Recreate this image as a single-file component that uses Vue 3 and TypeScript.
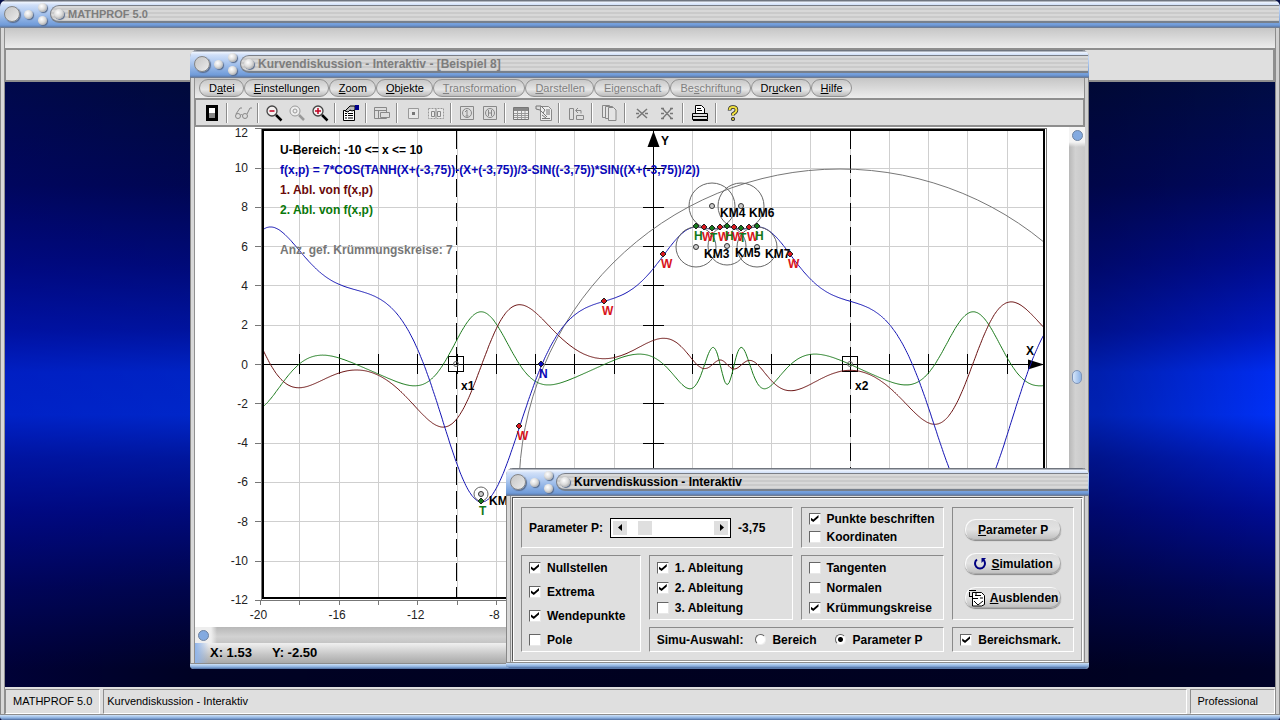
<script setup lang="ts">
import { computed, ref } from 'vue'

interface MenuItem { pre: string; key: string; post: string; off?: boolean }
interface Mark { x: number; y: number; kind: 'H' | 'T' | 'W' | 'N' }
interface Tool { icon: string; name: string; off?: boolean }

const menu: MenuItem[] = [
  { pre: 'D', key: 'a', post: 'tei' },
  { pre: '', key: 'E', post: 'instellungen' },
  { pre: '', key: 'Z', post: 'oom' },
  { pre: '', key: 'O', post: 'bjekte' },
  { pre: '', key: 'T', post: 'ransformation', off: true },
  { pre: '', key: 'D', post: 'arstellen', off: true },
  { pre: 'Ei', key: 'g', post: 'enschaft', off: true },
  { pre: 'Be', key: 's', post: 'chriftung', off: true },
  { pre: 'Dr', key: 'u', post: 'cken' },
  { pre: '', key: 'H', post: 'ilfe' },
]

const tools: Tool[][] = [
  [{ icon: 'door', name: 'Beenden' }],
  [{ icon: 'glasses', name: 'Ansicht', off: true }],
  [{ icon: 'zoomout', name: 'Verkleinern' }, { icon: 'zoomfit', name: 'Zoom', off: true }, { icon: 'zoomin', name: 'Vergrößern' }],
  [{ icon: 'props', name: 'Einstellungen' }],
  [{ icon: 'panes', name: 'Fenster', off: true }],
  [{ icon: 'single', name: 'Punkt', off: true }, { icon: 'double', name: 'Punkte', off: true }],
  [{ icon: 'one', name: 'Kreis 1', off: true }, { icon: 'two', name: 'Kreis 2', off: true }],
  [{ icon: 'table', name: 'Tabelle', off: true }, { icon: 'sheet', name: 'Blatt', off: true }],
  [{ icon: 'swap', name: 'Tauschen', off: true }],
  [{ icon: 'copy', name: 'Kopieren', off: true }],
  [{ icon: 'cross1', name: 'Löschen', off: true }, { icon: 'cross2', name: 'Alle löschen', off: true }],
  [{ icon: 'printer', name: 'Drucken' }],
  [{ icon: 'help', name: 'Hilfe' }],
]

const p = ref(-3.75)
const label = computed(() => p.value.toFixed(2).replace('.', ','))

const X0 = 653.5
const Y0 = 364.5
const U = 19.65
const px = (x: number) => X0 + x * U
const py = (y: number) => Y0 - y * U

function f(x: number): number {
  const u = x + p.value
  return 7 * Math.cos(Math.tanh(u) - u / 3 - Math.sin(p.value) * Math.sin(u / 2))
}
const d = 0.001
const f1 = (x: number) => (f(x + d) - f(x - d)) / (2 * d)
const f2 = (x: number) => (f(x + d) - 2 * f(x) + f(x - d)) / (d * d)

function trace(fn: (x: number) => number): string {
  const pts: string[] = []
  for (let x = -19.9; x <= 19.9; x += 0.05) pts.push(px(x).toFixed(1) + ',' + py(fn(x)).toFixed(1))
  return pts.join(' ')
}
const curve = computed(() => trace(f))
const curve1 = computed(() => trace(f1))
const curve2 = computed(() => trace(f2))

const evens = Array.from({ length: 19 }, (_, i) => (i - 9) * 2)
const yTicks = Array.from({ length: 13 }, (_, i) => 12 - i * 2)
const yInner = yTicks.filter((v) => Math.abs(v) < 12)
const xTicks = [-20, -16, -12, -8]

const marks: Mark[] = [
  { x: 696, y: 226, kind: 'H' }, { x: 704, y: 227, kind: 'W' }, { x: 712, y: 228, kind: 'T' },
  { x: 720, y: 227, kind: 'W' }, { x: 727, y: 226, kind: 'H' }, { x: 734, y: 227, kind: 'W' },
  { x: 741, y: 228, kind: 'T' }, { x: 749, y: 227, kind: 'W' }, { x: 757, y: 226, kind: 'H' },
  { x: 663, y: 254, kind: 'W' }, { x: 604, y: 301, kind: 'W' }, { x: 519, y: 426, kind: 'W' },
  { x: 790, y: 254, kind: 'W' }, { x: 541, y: 364, kind: 'N' }, { x: 481, y: 501, kind: 'T' },
]
const circles = [
  { x: 712, y: 206, r: 23, name: 'KM4' }, { x: 741, y: 206, r: 23, name: 'KM6' },
  { x: 696, y: 247, r: 20, name: 'KM3' }, { x: 727, y: 246, r: 19, name: 'KM5' },
  { x: 757, y: 247, r: 20, name: 'KM7' }, { x: 481, y: 494, r: 7, name: 'KM2' },
]

const zeros = ref([
  { name: 'Nullstellen', on: true }, { name: 'Extrema', on: true },
  { name: 'Wendepunkte', on: true }, { name: 'Pole', on: false },
])
const derivs = ref([
  { name: '1. Ableitung', on: true }, { name: '2. Ableitung', on: true }, { name: '3. Ableitung', on: false },
])
const captions = ref([{ name: 'Punkte beschriften', on: true }, { name: 'Koordinaten', on: false }])
const lines = ref([
  { name: 'Tangenten', on: false }, { name: 'Normalen', on: false }, { name: 'Krümmungskreise', on: true },
])
const rangeMark = ref(true)
const simu = ref('p')
</script>

<template>
  <div class="frame main">
    <svg class="sprite" aria-hidden="true">
      <symbol id="door" viewBox="0 0 18 18"><path d="M3 1h12v16H3z" fill="#000" /><path d="M6 4h6v5H6z" fill="#fff" /><path d="M6 9h6v5H6z" fill="#888" /></symbol>
      <symbol id="glasses" viewBox="0 0 18 18"><g fill="none" stroke="#888"><circle cx="4" cy="12" r="2.500" /><circle cx="11" cy="12" r="2.500" /><path d="M2 10L6 4h2M13 10l3-6h2M6.500 11q1-1 2 0" /></g></symbol>
      <symbol id="zoomout" viewBox="0 0 18 18"><circle cx="7" cy="7" r="5" fill="#f4f0f0" stroke="#444" stroke-width="1.300" /><path d="M4.500 7h5" stroke="#c00020" stroke-width="1.500" /><path d="M11 11l5.500 5.500" stroke="#000" stroke-width="2.500" /></symbol>
      <symbol id="zoomin" viewBox="0 0 18 18"><circle cx="7" cy="7" r="5" fill="#f4f0f0" stroke="#444" stroke-width="1.300" /><path d="M4 7h6M7 4v6" stroke="#c00020" stroke-width="1.500" /><path d="M11 11l5.500 5.500" stroke="#000" stroke-width="2.500" /></symbol>
      <symbol id="zoomfit" viewBox="0 0 18 18"><g fill="none" stroke="#999"><circle cx="7" cy="7" r="5" fill="#eee" /><circle cx="7" cy="7" r="2" /><path d="M11 11l5 5" stroke-width="2.500" /></g></symbol>
      <symbol id="props" viewBox="0 0 18 18"><path d="M1.500 6.500h11v10h-11z" fill="#fff" stroke="#000" /><path d="M3 9.500h2M6 9.500h5M3 11.500h2M6 11.500h5M3 14h2M6 14h5" stroke="#000" /><path d="M3 7l5-5h5v4l-3 1-2-1-2 2z" fill="#bbb" stroke="#000" /><path d="M13 1h4v5h-4z" fill="#00008b" /></symbol>
      <symbol id="panes" viewBox="0 0 18 18"><g fill="none" stroke="#888"><path d="M1.500 3.500h12v11h-12zM1.500 6.500h12M5.500 6.500v8" /><path d="M7.500 8.500h9v5h-9z" fill="#ddd" /></g></symbol>
      <symbol id="single" viewBox="0 0 18 18"><path d="M4.500 4.500h10v10h-10z" fill="#e8e8e8" stroke="#999" /><path d="M8 8h3v3H8z" fill="#777" /></symbol>
      <symbol id="double" viewBox="0 0 18 18"><path d="M1.500 4.500h15v10h-15z" fill="#e8e8e8" stroke="#999" stroke-dasharray="2 1" /><path d="M4.500 7.500h3v5h-3zM10.500 7.500h3v5h-3zM9 5v9" fill="none" stroke="#888" /></symbol>
      <symbol id="one" viewBox="0 0 18 18"><g fill="none" stroke="#888"><path d="M2.500 2.500h13v13h-13z" /><circle cx="9" cy="9" r="4.500" /><path d="M7 8l2-2v6M7.500 12h3" /></g></symbol>
      <symbol id="two" viewBox="0 0 18 18"><g fill="none" stroke="#888"><path d="M2.500 2.500h13v13h-13z" /><circle cx="9" cy="9" r="4.500" /><path d="M7.500 6v6M10.500 6v6M7.500 9h3" /></g></symbol>
      <symbol id="table" viewBox="0 0 18 18"><path d="M1.500 3.500h15v12h-15z" fill="#eee" stroke="#777" /><path d="M2 4h14v3H2z" fill="#888" /><path d="M2 9.500h14M2 11.500h14M2 13.500h14M5.500 7v8M9.500 7v8M13 7v8" stroke="#999" /></symbol>
      <symbol id="sheet" viewBox="0 0 18 18"><path d="M5.500 2.500h8l3 3v11h-11z" fill="#eee" stroke="#888" /><path d="M1 2h5l4 4-2 3-3-3-4-1zM7 11l4 3M7 8l5 5M11 6h4M11 8h4M11 10h4M7 14.500h8" fill="none" stroke="#777" /></symbol>
      <symbol id="swap" viewBox="0 0 18 18"><path d="M2.500 4.500h4v11h-4zM9.500 11.500h7v4h-7zM9 6.500h5v3M11 4L8.500 6.500 11 9" fill="none" stroke="#888" /></symbol>
      <symbol id="copy" viewBox="0 0 18 18"><g fill="#e4e4e4" stroke="#888"><path d="M2.500 1.500h7v12h-7z" /><path d="M5.500 2.500h7v12h-7z" /><path d="M8.500 3.500h5l2.500 2.500v10.500H8.500z" /></g></symbol>
      <symbol id="cross1" viewBox="0 0 18 18"><path d="M4 5l10 9M14 5L4 14M3 9.500h3M12 9.500h3" stroke="#777" stroke-width="1.500" /></symbol>
      <symbol id="cross2" viewBox="0 0 18 18"><path d="M4 4l10 11M14 4L4 15M3 4.500h3M12 4.500h3M3 14.500h3M12 14.500h3M3 9.500h3M12 9.500h3" stroke="#777" stroke-width="1.300" /></symbol>
      <symbol id="printer" viewBox="0 0 18 18"><path d="M4.500 9V1.500h6l3 3V9" fill="#fff" stroke="#000" /><path d="M6 4.500h4M6 6.500h5" stroke="#000" /><path d="M1.500 9.500h15v6h-15z" fill="#ddd" stroke="#000" /><path d="M2 12.500h14M2 16.500h15" stroke="#000" /></symbol>
      <symbol id="help" viewBox="0 0 18 18"><path d="M5.500 6.500q0-3.500 3.500-3.500t3.500 3q0 2-3.500 4v1.500" fill="none" stroke="#222" stroke-width="3.500" /><circle cx="9" cy="15" r="2" fill="#222" /><path d="M5.500 6q0-3 3.500-3t3.500 3q0 2-3.500 4v1.500" fill="none" stroke="#f0e040" stroke-width="2" /><circle cx="9" cy="15" r="1" fill="#f0e040" /></symbol>
    </svg>

    <header class="title dim">
      <span class="knobs">
        <button class="knob big" aria-label="Schließen"></button>
        <button class="knob" aria-label="Symbol"></button>
        <span class="pair"><button class="knob" aria-label="Maximieren"></button><button class="knob" aria-label="Minimieren"></button></span>
      </span>
      <span class="bar small"><button class="knob mid" aria-label="Menü"></button>MATHPROF 5.0</span>
    </header>
    <div class="strip"></div>
    <div class="tray"></div>

    <main class="desk">
      <section class="frame doc">
        <header class="title dim">
          <span class="knobs">
            <button class="knob big" aria-label="Schließen"></button>
            <button class="knob" aria-label="Symbol"></button>
            <span class="pair"><button class="knob" aria-label="Maximieren"></button><button class="knob" aria-label="Minimieren"></button></span>
          </span>
          <span class="bar"><button class="knob mid" aria-label="Menü"></button>Kurvendiskussion - Interaktiv - [Beispiel 8]</span>
        </header>
        <nav class="menu">
          <button v-for="m in menu" :key="m.pre + m.key + m.post" :disabled="m.off">{{ m.pre }}<u>{{ m.key }}</u>{{ m.post }}</button>
        </nav>
        <div class="tools">
          <div v-for="(g, i) in tools" :key="i" class="group" :class="{ wide: i > 7 }">
            <button v-for="t in g" :key="t.icon" :disabled="t.off" :aria-label="t.name">
              <svg width="18" height="18"><use :href="'#' + t.icon" /></svg>
            </button>
          </div>
        </div>
        <div class="view">
          <svg class="plot" viewBox="195 127 874 500">
            <defs><clipPath id="area"><rect x="264" y="131" width="779" height="467" /></clipPath></defs>
            <g stroke="#cfcfcf" shape-rendering="crispEdges">
              <line v-for="v in evens" :key="'gx' + v" :x1="px(v)" :x2="px(v)" y1="131" y2="598" />
              <line v-for="v in yInner" :key="'gy' + v" x1="264" x2="1043" :y1="py(v)" :y2="py(v)" />
            </g>
            <g stroke="#777" shape-rendering="crispEdges">
              <line v-for="v in yTicks" :key="'ty' + v" x1="255" x2="262" :y1="py(v)" :y2="py(v)" />
              <line v-for="v in [-20, ...evens]" :key="'tx' + v" :x1="px(v)" :x2="px(v)" y1="600" y2="605" />
              <path d="M261.500 128.500H1046.500V600.500H261.500z" fill="none" />
            </g>
            <path d="M263 130H1044V598H263z" fill="none" stroke="#000" stroke-width="2" shape-rendering="crispEdges" />
            <g class="axis" text-anchor="end">
              <text v-for="v in yTicks" :key="'ly' + v" x="248" :y="py(v) + (v === 12 ? 8 : 4)">{{ v }}</text>
            </g>
            <g class="axis" text-anchor="middle">
              <text v-for="v in xTicks" :key="'lx' + v" :x="px(v) - 2" y="619">{{ v }}</text>
            </g>
            <g stroke="#000" shape-rendering="crispEdges">
              <path d="M264 364.500H1043M653.500 131V598" />
              <line v-for="v in evens" :key="'ax' + v" :x1="px(v)" :x2="px(v)" y1="354" y2="374" />
              <line v-for="v in yInner" :key="'ay' + v" x1="643" x2="664" :y1="py(v)" :y2="py(v)" />
              <path d="M456.500 131V598M850.500 131V598" stroke-dasharray="18 6" />
              <path d="M448.500 356.500h15v15h-15zM842.500 356.500h15v15h-15z" fill="none" />
            </g>
            <path d="M653.500 131l6 16h-12zM1044 364.500l-16 5v-10z" />
            <g clip-path="url(#area)" fill="none">
              <circle cx="840" cy="490" r="321" stroke="#777" />
              <polyline :points="curve2" stroke="#1b7a1b" />
              <polyline :points="curve1" stroke="#6b1212" />
              <polyline :points="curve" stroke="#1414b4" />
            </g>
            <g fill="none" stroke="#666">
              <circle v-for="c in circles" :key="c.name" :cx="c.x" :cy="c.y" :r="c.r" />
              <circle v-for="c in circles" :key="'c' + c.name" :cx="c.x" :cy="c.y" r="2.500" fill="#ccc" stroke="#333" />
              <circle cx="456" cy="364" r="2.500" /><circle cx="850" cy="364" r="2.500" />
            </g>
            <g class="note">
              <text x="280" y="154">U-Bereich: -10 &lt;= x &lt;= 10</text>
              <text x="280" y="174" class="blue">f(x,p) = 7*COS(TANH(X+({{ label }}))-(X+({{ label }}))/3-SIN(({{ label }}))*SIN((X+({{ label }}))/2))</text>
              <text x="280" y="194" class="red">1. Abl. von f(x,p)</text>
              <text x="280" y="214" class="green">2. Abl. von f(x,p)</text>
              <text x="280" y="254" class="gray">Anz. gef. Krümmungskreise: 7</text>
              <text x="661" y="145">Y</text>
              <text x="1026" y="355">X</text>
              <text x="461" y="390">x1</text>
              <text x="855" y="390">x2</text>
              <text v-for="c in circles" :key="'n' + c.name" :x="c.x + 8" :y="c.y + 11">{{ c.name }}</text>
            </g>
            <g v-for="m in marks" :key="m.x" :class="['mark', m.kind]">
              <path :d="`M${m.x - 3} ${m.y}l3 -3 3 3 -3 3z`" stroke="#222" />
              <text :x="m.x - 2" :y="m.y + 14">{{ m.kind }}</text>
            </g>
          </svg>
          <div class="scroll v"><button class="dot" aria-label="Nach oben"></button><span class="thumb"></span></div>
        </div>
        <div class="scroll h"><button class="dot" aria-label="Nach links"></button></div>
        <footer class="coords"><span>X: 1.53</span><span>Y: -2.50</span></footer>
      </section>

      <section class="frame dialog">
        <header class="title">
          <span class="knobs">
            <button class="knob big" aria-label="Schließen"></button>
            <button class="knob" aria-label="Symbol"></button>
            <span class="pair"><button class="knob" aria-label="Maximieren"></button><button class="knob" aria-label="Minimieren"></button></span>
          </span>
          <span class="bar"><button class="knob mid" aria-label="Menü"></button>Kurvendiskussion - Interaktiv</span>
        </header>
        <form class="panel" @submit.prevent>
          <div class="box param">
            <label for="param">Parameter P:</label>
            <span class="spin">
              <button type="button" aria-label="Kleiner" @click="p -= 0.05"><svg width="5" height="8"><path d="M4 0v7L0 3.500z" /></svg></button>
              <input id="param" v-model.number="p" type="range" min="-5" max="3" step="0.05">
              <button type="button" aria-label="Größer" @click="p += 0.05"><svg width="5" height="8"><path d="M1 0v7l4-3.500z" /></svg></button>
            </span>
            <output for="param">{{ label }}</output>
          </div>
          <div class="box caps">
            <label v-for="c in captions" :key="c.name"><input v-model="c.on" type="checkbox">{{ c.name }}</label>
          </div>
          <div class="box actions">
            <button type="button"><span><u>P</u>arameter P</span></button>
            <button type="button">
              <svg width="14" height="14"><path d="M4 2.500a5 5 0 1 0 6 0" fill="none" stroke="#000080" stroke-width="2" /><path d="M13 1H8.500v5z" fill="#000080" /></svg>
              <span><u>S</u>imulation</span>
            </button>
            <button type="button">
              <svg width="18" height="18"><path d="M4.500 3.500h9l3 3v9l-3 1.500h-9z" fill="#fff" stroke="#000" /><path d="M1 1.500h7M1.500 3v5M1 7.500h4M7 6.500h6M4 9.500h6M6 12l4 4 5-4M8 4v2M12 9h3" fill="none" stroke="#000" /></svg>
              <span><u>A</u>usblenden</span>
            </button>
          </div>
          <div class="box zeros">
            <label v-for="c in zeros" :key="c.name"><input v-model="c.on" type="checkbox">{{ c.name }}</label>
          </div>
          <div class="box derivs">
            <label v-for="c in derivs" :key="c.name"><input v-model="c.on" type="checkbox">{{ c.name }}</label>
          </div>
          <div class="box lines">
            <label v-for="c in lines" :key="c.name"><input v-model="c.on" type="checkbox">{{ c.name }}</label>
          </div>
          <div class="box simu">
            <span>Simu-Auswahl:</span>
            <label><input v-model="simu" type="radio" name="simu" value="b">Bereich</label>
            <label><input v-model="simu" type="radio" name="simu" value="p">Parameter P</label>
          </div>
          <div class="box range">
            <label><input v-model="rangeMark" type="checkbox">Bereichsmark.</label>
          </div>
        </form>
      </section>
    </main>

    <footer class="status"><span>MATHPROF 5.0</span><span class="grow">Kurvendiskussion - Interaktiv</span><span>Professional</span></footer>
  </div>
</template>

<style>
body { margin: 0; background: #06104a; }
</style>

<style scoped>
*, *::before, *::after { box-sizing: border-box; }
button, input { margin: 0; padding: 0; border: 0; font: inherit; color: inherit; background: none; }
.sprite { position: absolute; width: 0; height: 0; }
.frame {
  display: flex; flex-direction: column; font: 11px/14px "Liberation Sans", Arial, sans-serif; color: #000;
  background: linear-gradient(90deg, #888 0 1px, #d8d8d8 1px 4px, #909090 4px 5px, #dedede 5px calc(100% - 5px), #8c8c8c calc(100% - 5px) calc(100% - 4px), #d0d0d0 calc(100% - 4px) calc(100% - 1px), #888 calc(100% - 1px));
  border-radius: 7px 7px 4px 4px;
}
.frame::after {
  content: ""; flex: none; height: 6px; border-radius: 0 0 4px 4px;
  background: linear-gradient(#8d8d8d 0 1px, #cfe2f8 1px, #8bb0e0 4px, #4c6a9c);
}
.main { min-height: 100vh; }

.title {
  display: flex; flex: none; height: 28px; border-radius: 7px 7px 0 0; overflow: hidden;
  font-size: 12px; font-weight: bold;
  background: linear-gradient(#70757e 0 1px, #f0f5fe 2px, #cfdff8 5px, #b9d0f3 10px, #6f9bd9 25px, #5f7ba8 27px, #808080 28px);
}
.dim { color: #7d7d7d; }
.knobs { display: flex; align-items: center; flex: none; gap: 4px; width: 50px; padding-left: 4px; }
.pair { display: flex; flex-direction: column; gap: 4px; margin-left: 1px; }
.knob {
  display: block; flex: none; width: 9px; height: 9px; border-radius: 50%;
  background: radial-gradient(circle at 40% 35%, #fff, #dcdcdc 45%, #8c8c8c 100%); box-shadow: 1px 1px 1px #566a8c;
}
.big { width: 16px; height: 16px; border: 1px solid #858585; background: linear-gradient(135deg, #c4c4c4, #ececec); }
.mid { width: 10px; height: 10px; margin-right: 4px; }
.bar {
  display: flex; align-items: center; flex: 1; margin: 5px 1px 5px 0; padding-left: 3px; white-space: nowrap;
  border: 1px solid #7a7e86; border-right: 0; border-bottom: 2px solid #77808c; border-radius: 9px 0 0 9px;
  background: repeating-linear-gradient(#d8d8d8 0 2px, #cacaca 2px 4px);
}
.small { font-size: 11px; }
.strip { flex: none; height: 20px; margin: 0 5px; background: linear-gradient(#c6c6c6, #ececec); }
.tray { flex: none; height: 34px; margin: 0 5px; background: #dfdfdf; border: solid #8e8e8e; border-width: 2px 2px 2px 1px; }

.desk {
  position: relative; flex: 1; min-height: 605px; margin: 0 5px;
  background:
    linear-gradient(90deg, rgba(0, 0, 90, .3) 0%, rgba(0, 0, 20, .2) 15%, rgba(0, 0, 20, .4) 50%, rgba(0, 0, 20, .3) 86%, rgba(0, 0, 60, 0) 100%),
    linear-gradient(#000c44 0%, #000860 17%, #000c90 30%, #0018c0 41%, #002cf0 48%, #0030f6 55%, #001cc0 62%, #000c94 71%, #000658 84%, #000228 97%);
}
.doc { position: absolute; left: 185px; right: 186px; top: -32px; }
.dialog { position: absolute; left: 501px; right: 186px; top: 386px; }

.menu { display: flex; height: 20px; margin: 0 5px; padding: 1px 4px; background: linear-gradient(#c6c6c6, #ececec); }
.menu button {
  padding: 0 8px 0 9px; border: 1px solid #929292; border-radius: 9px; line-height: 16px; white-space: nowrap;
  background: linear-gradient(#c8c8c8, #e6e6e6 60%, #bcbcbc);
}
.menu button:disabled { color: #808080; }
.tools { display: flex; height: 29px; margin: 0 5px; padding: 0 4px; border: solid #8e8e8e; border-width: 2px 1px 2px 1px; }
.group { display: flex; align-items: center; }
.group + .group::before { content: ""; width: 2px; height: 20px; margin: 0 3px; border-left: 1px solid #8c8c8c; border-right: 1px solid #fff; }
.group button { display: grid; place-items: center; width: 23px; height: 22px; }
.wide button { width: 25px; }

.view { display: flex; margin: 0 4px 0 5px; background: #fff; }
.plot { display: block; flex: 1; min-width: 0; background: #fff; }
.axis { font: 12px "Liberation Sans", Arial, sans-serif; fill: #222; }
.note, .mark { font: bold 12px "Liberation Sans", Arial, sans-serif; }
.blue, .N { fill: #0808b8; }
.red { fill: #6b0a0a; }
.green { fill: #0a780a; }
.gray { fill: #777; }
.H, .T { fill: #14781c; }
.W { fill: #d8141c; }
.scroll { display: flex; background: linear-gradient(90deg, #b8b8b8, #d2d2d2 40%, #c8c8c8); }
.v { flex-direction: column; width: 16px; padding-bottom: 17px; align-items: center; }
.h { height: 16px; margin: 0 5px; align-items: center; background: linear-gradient(90deg, #eee 16px, transparent 22px), linear-gradient(#b8b8b8, #d2d2d2 60%, #c4c4c4); }
.dot { width: 11px; height: 11px; margin: 3px; border: 1px solid #6d82a0; border-radius: 50%; background: #83aae0; }
.v { background: linear-gradient(#f4f4f4 15px, transparent 20px), linear-gradient(90deg, #b8b8b8, #d2d2d2 40%, #c8c8c8); }
.thumb { width: 10px; height: 14px; margin: auto 0; border: 1px solid #7d94b8; border-radius: 5px; background: linear-gradient(90deg, #d6e6fa, #8bb2e6); }
.coords {
  display: flex; gap: 20px; height: 20px; margin: 0 5px; padding-left: 15px; font-size: 13px; font-weight: bold; line-height: 20px;
  background: linear-gradient(90deg, #8fb4ea, rgba(200, 220, 245, 0) 14px), linear-gradient(#f0f0f0, #c4c4c4 60%, #aaa);
}

.panel {
  display: grid; grid-template: 41px 65px 25px / 120fr 144fr 144fr 122fr; gap: 7px 8px; margin: 1px 6px 0 6px; padding: 9px 8px;
  border: 1px solid #555; border-right-color: #fff; border-bottom-color: #fff; box-shadow: inset 1px 1px #fff, inset -1px -1px #999;
  font-size: 12px; font-weight: bold; background: #dfdfdf;
}
.box { display: flex; min-width: 0; white-space: nowrap; border: 1px solid #8a8a8a; border-right-color: #fff; border-bottom-color: #fff; }
.param { grid-area: 1 / 1 / 2 / 3; align-items: center; padding-left: 7px; gap: 7px; }
.caps { grid-area: 1 / 3; flex-direction: column; justify-content: center; gap: 4px; padding-left: 7px; }
.actions { grid-area: 1 / 4 / 3 / 5; flex-direction: column; align-items: center; justify-content: center; gap: 13px; }
.zeros { grid-area: 2 / 1 / 4 / 2; flex-direction: column; justify-content: center; gap: 10px; padding-left: 7px; }
.derivs { grid-area: 2 / 2; flex-direction: column; justify-content: center; gap: 6px; padding-left: 7px; }
.lines { grid-area: 2 / 3; flex-direction: column; justify-content: center; gap: 6px; padding-left: 7px; }
.simu { grid-area: 3 / 2 / 4 / 4; align-items: center; padding-left: 7px; gap: 12px; }
.simu label:last-child { margin-left: 7px; }
.range { grid-area: 3 / 4; align-items: center; padding-left: 7px; }
label { display: flex; align-items: center; gap: 6px; }
input[type="checkbox"] {
  appearance: none; width: 12px; height: 12px; flex: none; background: #fff;
  border: 1px solid #666; border-right-color: #e8e8e8; border-bottom-color: #e8e8e8; display: grid; place-items: center;
}
input[type="checkbox"]:checked::after {
  content: ""; width: 8px; height: 7px; background: #000; clip-path: polygon(0 35%, 35% 65%, 100% 0, 100% 35%, 35% 100%, 0 70%);
}
input[type="radio"] {
  appearance: none; width: 11px; height: 11px; flex: none; border: 1px solid #666; border-right-color: #eee; border-bottom-color: #eee;
  border-radius: 50%; background: #fff;
}
input[type="radio"]:checked { background: radial-gradient(circle, #000 2px, #fff 3px); }
.spin { display: flex; width: 121px; height: 20px; padding: 2px; border: 1px solid #000; background: #fff; }
.spin button { display: grid; place-items: center; width: 14px; background: #dfdfdf; }
.spin input { appearance: none; flex: 1; min-width: 0; height: 14px; }
.spin input::-webkit-slider-thumb { appearance: none; width: 14px; height: 14px; background: #dfdfdf; }
.actions button {
  display: flex; align-items: center; justify-content: center; gap: 4px; width: 96px; height: 21px; border-radius: 10px;
  background: linear-gradient(#dadada, #e2e2e2 50%, #bdbdbd); box-shadow: inset 1px 1px #fafafa, inset -1px -1px #aaa, 0 1px 1px #888;
}
.actions svg { flex: none; }

.status { display: flex; flex: none; gap: 3px; height: 27px; margin: 0 5px; padding-top: 2px; background: #dfdfdf; }
.status span { padding: 0 7px; line-height: 23px; border: 1px solid #8e8e8e; border-right-color: #fff; border-bottom-color: #fff; white-space: nowrap; }
.status span:last-child { padding: 0 16px 0 6px; }
.status .grow { flex: 1; padding: 0 3px; }
</style>
